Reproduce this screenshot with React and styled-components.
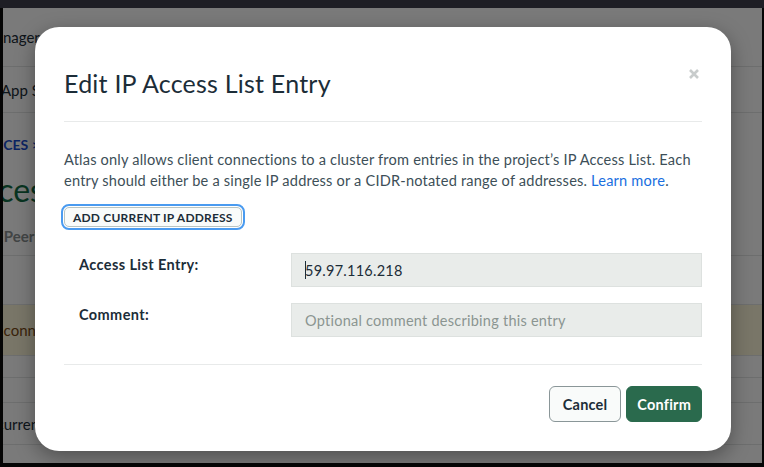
import React from 'react'
import styled, { createGlobalStyle } from 'styled-components'

const GlobalStyle = createGlobalStyle`
  html, body {
    margin: 0;
    padding: 0;
    background: #050505;
  }
  body {
    font-family: Lato, "Noto Sans", sans-serif;
    -webkit-font-smoothing: antialiased;
  }
`

const Frame = styled.div`
  width: 764px;
  height: 467px;
  display: flex;
  flex-direction: column;
  background: #050505;
  overflow: hidden;
`

const TopBar = styled.div`
  height: 8px;
  background: #1e1e25;
  flex: none;
`

const Screen = styled.div`
  position: relative;
  flex: 1;
  margin: 0 2px 4px 3px;
  background: #ffffff;
  overflow: hidden;
`

const Page = styled.div`
  display: flex;
  flex-direction: column;
  margin-left: -70px;
`

const PageRow = styled.div`
  height: ${p => p.h}px;
  box-sizing: border-box;
  flex: none;
  display: flex;
  align-items: ${p => (p.bottom ? 'flex-end' : 'center')};
  padding-bottom: ${p => (p.bottom ? 9 : 0)}px;
  padding-left: ${p => p.shift || 0}px;
  border-bottom: ${p => (p.line ? '1px solid #e4e6e6' : 'none')};
  background: ${p => p.bg || 'transparent'};
  color: ${p => p.color || '#1c2d38'};
  font-size: ${p => p.size || 15}px;
  line-height: 20px;
  font-weight: ${p => p.weight || 400};
  white-space: nowrap;
`

const Tab = styled.span`
  margin-right: 24px;
`

const Overlay = styled.div`
  position: absolute;
  inset: 0;
  background: rgba(0, 0, 0, 0.52);
  display: flex;
  align-items: flex-start;
  padding: 19px 0 0 32px;
`

const Modal = styled.div`
  width: 696px;
  height: 424px;
  box-sizing: border-box;
  background: #ffffff;
  border-radius: 24px;
  box-shadow: 0 6px 20px rgba(0, 0, 0, 0.35);
  padding: 40px 29px 0 29px;
  display: flex;
  flex-direction: column;
  color: #1c2d38;
  letter-spacing: 0.25px;
`

const Header = styled.div`
  display: flex;
  justify-content: space-between;
  align-items: flex-start;
  padding-bottom: 22px;
  border-bottom: 1px solid #e8eaea;
`

const Title = styled.h2`
  margin: 0;
  font-size: 25px;
  line-height: 32px;
  font-weight: 400;
  letter-spacing: 0.22px;
  color: #1c2d38;
`

const Close = styled.button`
  border: none;
  background: none;
  padding: 0;
  margin: 0 1px 0 0;
  width: 14px;
  height: 14px;
  display: flex;
  cursor: pointer;
`

const Body = styled.div`
  padding-top: 27px;
  display: flex;
  flex-direction: column;
  padding-bottom: 27px;
  border-bottom: 1px solid #e8eaea;
`

const Text = styled.p`
  margin: 0;
  font-size: 14.6px;
  line-height: 21px;
  letter-spacing: 0.19px;
  color: #3d4f58;
`

const Link = styled.a`
  color: #1a6fe0;
  text-decoration: none;
`

const FocusRing = styled.div`
  align-self: flex-start;
  margin: 13px 0 0 -3px;
  padding: 1px;
  border: 2px solid #4a9bf0;
  border-radius: 8px;
`

const SmallButton = styled.button`
  font-family: inherit;
  font-size: 12px;
  font-weight: 700;
  letter-spacing: 0.2px;
  color: #1c2d38;
  background: #f9fbfa;
  border: 1px solid #b8c4c2;
  border-radius: 5px;
  height: 20px;
  padding: 0 8px;
  display: flex;
  align-items: center;
`

const Fields = styled.div`
  display: grid;
  grid-template-columns: 212px 1fr;
  row-gap: 16px;
  margin: 23px 0 0 15px;
  align-items: center;
`

const Label = styled.label`
  font-size: 14.5px;
  font-weight: 700;
  letter-spacing: 0.4px;
  color: #1c2d38;
  align-self: start;
  padding-top: 3px;
`

const Input = styled.div`
  height: 34px;
  box-sizing: border-box;
  background: #e9ecea;
  border: 1px solid #dde1df;
  display: flex;
  align-items: center;
  padding-left: 13px;
  font-size: 14.5px;
  color: ${p => (p.placeholder ? '#8b9591' : '#1c2d38')};
`

const Caret = styled.span`
  width: 1px;
  height: 18px;
  background: #1c2d38;
  margin-right: -1px;
`

const Footer = styled.div`
  display: flex;
  justify-content: flex-end;
  gap: 5px;
  padding-top: 21px;
`

const ActionButton = styled.button`
  font-family: inherit;
  font-size: 14.5px;
  font-weight: 700;
  letter-spacing: 0.2px;
  height: 36px;
  box-sizing: border-box;
  border-radius: 6px;
  padding: 0 ${p => (p.primary ? 10 : 13)}px;
  color: ${p => (p.primary ? '#ffffff' : '#1c2d38')};
  background: ${p => (p.primary ? '#2a6a4d' : '#f9fbfa')};
  border: 1px solid ${p => (p.primary ? '#2a6a4d' : '#8a9698')};
`

export default function App() {
  return (
    <>
      <GlobalStyle />
      <Frame>
        <TopBar />
        <Screen>
          <Page>
            <PageRow h={59} line>Access Manager</PageRow>
            <PageRow h={46} line shift={32}>Atlas App Services</PageRow>
            <PageRow h={64} color="#1a4fd0" weight={700} size={14} shift={32}>SERVICES &gt;</PageRow>
            <PageRow h={26} color="#116d46" size={32} shift={29}>Access</PageRow>
            <PageRow h={53} line bottom color="#8a9090" weight={700} size={15} shift={23}><Tab>List</Tab>Peering</PageRow>
            <PageRow h={49} line />
            <PageRow h={51} line bg="#fcf6d9" color="#7a4a14" size={15} shift={39}>only connect from IP addresses</PageRow>
            <PageRow h={22} line />
            <PageRow h={25} line />
            <PageRow h={42} line shift={30}>Your current IP address</PageRow>
          </Page>
          <Overlay>
            <Modal>
              <Header>
                <Title>Edit IP Access List Entry</Title>
                <Close aria-label="Close">
                  <svg width="14" height="14" viewBox="0 0 14 14">
                    <path d="M3 3 L11 11 M11 3 L3 11" stroke="#c8cccc" strokeWidth="2.6" strokeLinecap="butt" />
                  </svg>
                </Close>
              </Header>
              <Body>
                <Text>
                  Atlas only allows client connections to a cluster from entries in the project’s IP Access List. Each
                  entry should either be a single IP address or a CIDR-notated range of addresses. <Link href="#">Learn more</Link>.
                </Text>
                <FocusRing>
                  <SmallButton>ADD CURRENT IP ADDRESS</SmallButton>
                </FocusRing>
                <Fields>
                  <Label>Access List Entry:</Label>
                  <Input><Caret />59.97.116.218</Input>
                  <Label>Comment:</Label>
                  <Input placeholder>Optional comment describing this entry</Input>
                </Fields>
              </Body>
              <Footer>
                <ActionButton>Cancel</ActionButton>
                <ActionButton primary>Confirm</ActionButton>
              </Footer>
            </Modal>
          </Overlay>
        </Screen>
      </Frame>
    </>
  )
}
